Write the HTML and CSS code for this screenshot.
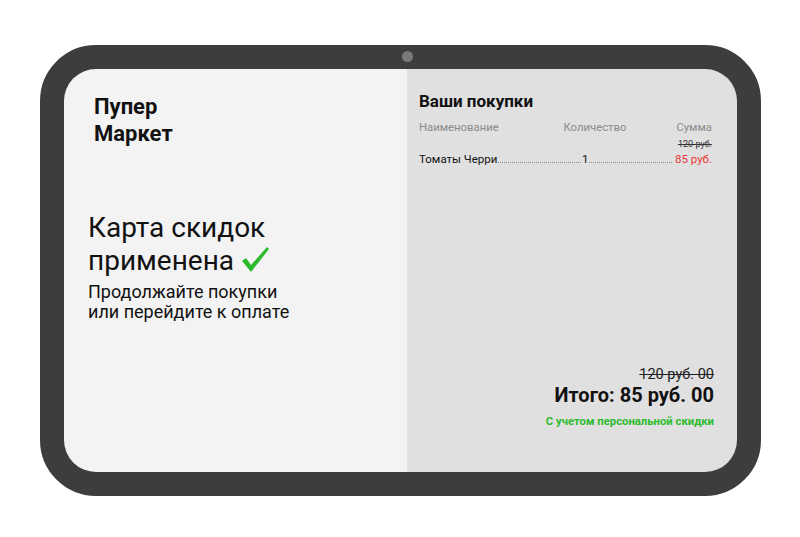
FILE: index.html
```html
<!DOCTYPE html>
<html lang="ru">

<head>
    <meta charset="UTF-8">
    <meta name="viewport" content="width=device-width, initial-scale=1.0">
    <title>Пупер Маркет</title>
    <link rel="stylesheet" href="styles.css">
</head>

<body>
    <div class="tablet">
        <span class="camera"></span>
        <div class="screen">
            <div class="welcome">
                <h1 class="brand">Пупер<br>Маркет</h1>
                <h2 class="status">Карта скидок<br>применена
                    <svg class="check" width="30" height="28" viewBox="0 0 30 28">
                        <path d="M2 16 L6 13 L11 20 L27 2 L29 4 L11 27 Z" fill="#2dbb2d"/>
                    </svg>
                </h2>
                <p class="hint">Продолжайте покупки<br>или перейдите к оплате</p>
            </div>

            <div class="cart">
                <h3>Ваши покупки</h3>
                <div class="cart-head">
                    <span>Наименование</span>
                    <span class="qty-title">Количество</span>
                    <span class="sum-title">Сумма</span>
                </div>
                <div class="item">
                    <div class="old-price">120 руб.</div>
                    <div class="item-row">
                        <span>Томаты Черри</span>
                        <span class="dots"></span>
                        <span>1</span>
                        <span class="dots"></span>
                        <span class="price">85 руб.</span>
                    </div>
                </div>

                <div class="total">
                    <div class="total-old">120 руб. 00</div>
                    <div class="total-sum">Итого: 85 руб. 00</div>
                    <div class="total-note">С учетом персональной скидки</div>
                </div>
            </div>
        </div>
    </div>
</body>

</html>
```

FILE: styles.css
```css
* {
    margin: 0;
    padding: 0;
    box-sizing: border-box;
}

body {
    font-family: Roboto, "Noto Sans", Arial, sans-serif;
    background-color: #ffffff;
    color: #111;
}

.tablet {
    position: relative;
    width: 721px;
    height: 451px;
    margin: 45px 0 0 40px;
    border: 24px solid #3d3d3d;
    border-radius: 56px;
    background-color: #3d3d3d;
}

.camera {
    position: absolute;
    top: -18px;
    left: 338px;
    width: 11px;
    height: 11px;
    border-radius: 50%;
    background-color: #7a7a7a;
}

.screen {
    display: flex;
    height: 100%;
    border-radius: 32px;
    overflow: hidden;
}

/* left side */
.welcome {
    width: 343px;
    background-color: #f3f3f3;
    padding: 24px 0 0 24px;
}

.brand {
    font-size: 22px;
    line-height: 27px;
    font-weight: 700;
    margin-left: 6px;
}

.status {
    margin-top: 64px;
    font-size: 28px;
    line-height: 33px;
    font-weight: 400;
}

.check {
    vertical-align: -3px;
    margin-left: -1px;
}

.hint {
    margin-top: 5px;
    font-size: 18px;
    line-height: 20px;
}

/* right side */
.cart {
    flex: 1;
    display: flex;
    flex-direction: column;
    background-color: #e0e0e0;
    padding: 22px 25px 43px 12px;
}

.cart h3 {
    font-size: 17px;
    line-height: 20px;
    font-weight: 700;
}

.cart-head {
    display: flex;
    margin-top: 10px;
    font-size: 11.3px;
    line-height: 14px;
    color: #8a8a8a;
}

.qty-title {
    margin-left: auto;
}

.sum-title {
    margin-left: 50px;
}

.old-price {
    text-align: right;
    font-size: 9px;
    line-height: 10px;
    margin-top: 4px;
    text-decoration: line-through;
    color: #333;
}

.item-row {
    display: flex;
    align-items: baseline;
    margin-top: 2px;
    font-size: 11.5px;
    line-height: 16px;
}

.dots {
    flex: 1;
    margin: 0 1px;
    border-bottom: 1px dotted #8a8a8a;
}

.price {
    margin-left: 2px;
    color: #e53935;
}

.total {
    margin-top: auto;
    margin-right: -2px;
    text-align: right;
}

.total-old {
    font-size: 14.5px;
    line-height: 16px;
    text-decoration: line-through;
    color: #222;
}

.total-sum {
    margin-top: 1px;
    font-size: 20px;
    line-height: 22px;
    font-weight: 700;
}

.total-note {
    margin-top: 9px;
    font-size: 11.3px;
    line-height: 14px;
    font-weight: 700;
    color: #2dbb2d;
}
```
